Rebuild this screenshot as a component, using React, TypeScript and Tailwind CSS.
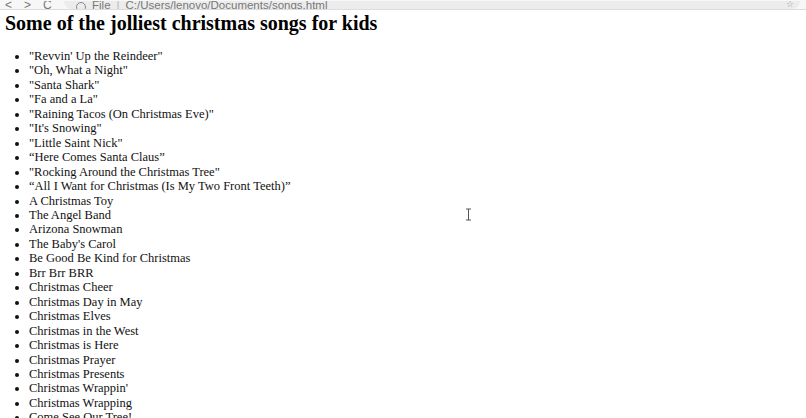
import * as React from 'react';

const songs = [
  '"Revvin\' Up the Reindeer"',
  '"Oh, What a Night"',
  '"Santa Shark"',
  '"Fa and a La"',
  '"Raining Tacos (On Christmas Eve)"',
  '"It\'s Snowing"',
  '"Little Saint Nick"',
  '\u201cHere Comes Santa Claus\u201d',
  '"Rocking Around the Christmas Tree"',
  '\u201cAll I Want for Christmas (Is My Two Front Teeth)\u201d',
  'A Christmas Toy',
  'The Angel Band',
  'Arizona Snowman',
  "The Baby's Carol",
  'Be Good Be Kind for Christmas',
  'Brr Brr BRR',
  'Christmas Cheer',
  'Christmas Day in May',
  'Christmas Elves',
  'Christmas in the West',
  'Christmas is Here',
  'Christmas Prayer',
  'Christmas Presents',
  "Christmas Wrappin'",
  'Christmas Wrapping',
  'Come See Our Tree!',
];

// top of the browser window, mostly scrolled out of the shot
function BrowserStrip() {
  return (
    <div className="h-[10px] bg-[#f7f7f7] border-b border-[#dcdcdc] overflow-hidden flex items-end">
      <div className="flex items-end h-[8px] overflow-hidden text-[#777] text-[12px] leading-[8px] font-['Liberation_Sans',sans-serif]">
        <div className="flex items-end pl-[5px] gap-[12px] w-[64px]">
          <span>&lt;</span>
          <span>&gt;</span>
          <span>C</span>
        </div>
      </div>
      <div className="flex-1 h-[8px] mr-[6px] bg-[#ececec] rounded-b-[8px] overflow-hidden flex items-end pl-[12px] relative">
        <div className="flex items-end gap-[6px] h-[8px] text-[11.5px] leading-[8px] text-[#777] font-['Liberation_Sans',sans-serif]">
          <span className="inline-block w-[10px] h-[10px] -mb-[3px] rounded-full border border-[#888]"></span>
          <span>File</span>
          <span className="text-[#bbb]">|</span>
          <span>C:/Users/lenovo/Documents/songs.html</span>
        </div>
        <span className="absolute right-[6px] bottom-[1px] text-[9px] leading-[7px] text-[#999]">☆</span>
      </div>
    </div>
  );
}

export default function App() {
  return (
    <div className="w-[806px] h-[418px] bg-white overflow-hidden relative font-['Liberation_Serif',serif] text-black">
      <BrowserStrip />
      <h1 className="font-bold text-[20px] leading-[24px] pl-[5px] pt-[1px]">
        Some of the jolliest christmas songs for kids
      </h1>
      <ul className="list-disc pl-[29px] mt-[14px] text-[12.5px] leading-[14.45px] text-[#111]">
        {songs.map((s) => (
          <li key={s}>{s}</li>
        ))}
      </ul>
      <svg className="absolute left-[465px] top-[208px]" width="7" height="13" viewBox="0 0 7 13">
        <path d="M1 1h5M3.5 1v11M1 12h5" stroke="#555" strokeWidth="1" fill="none" />
      </svg>
    </div>
  );
}
